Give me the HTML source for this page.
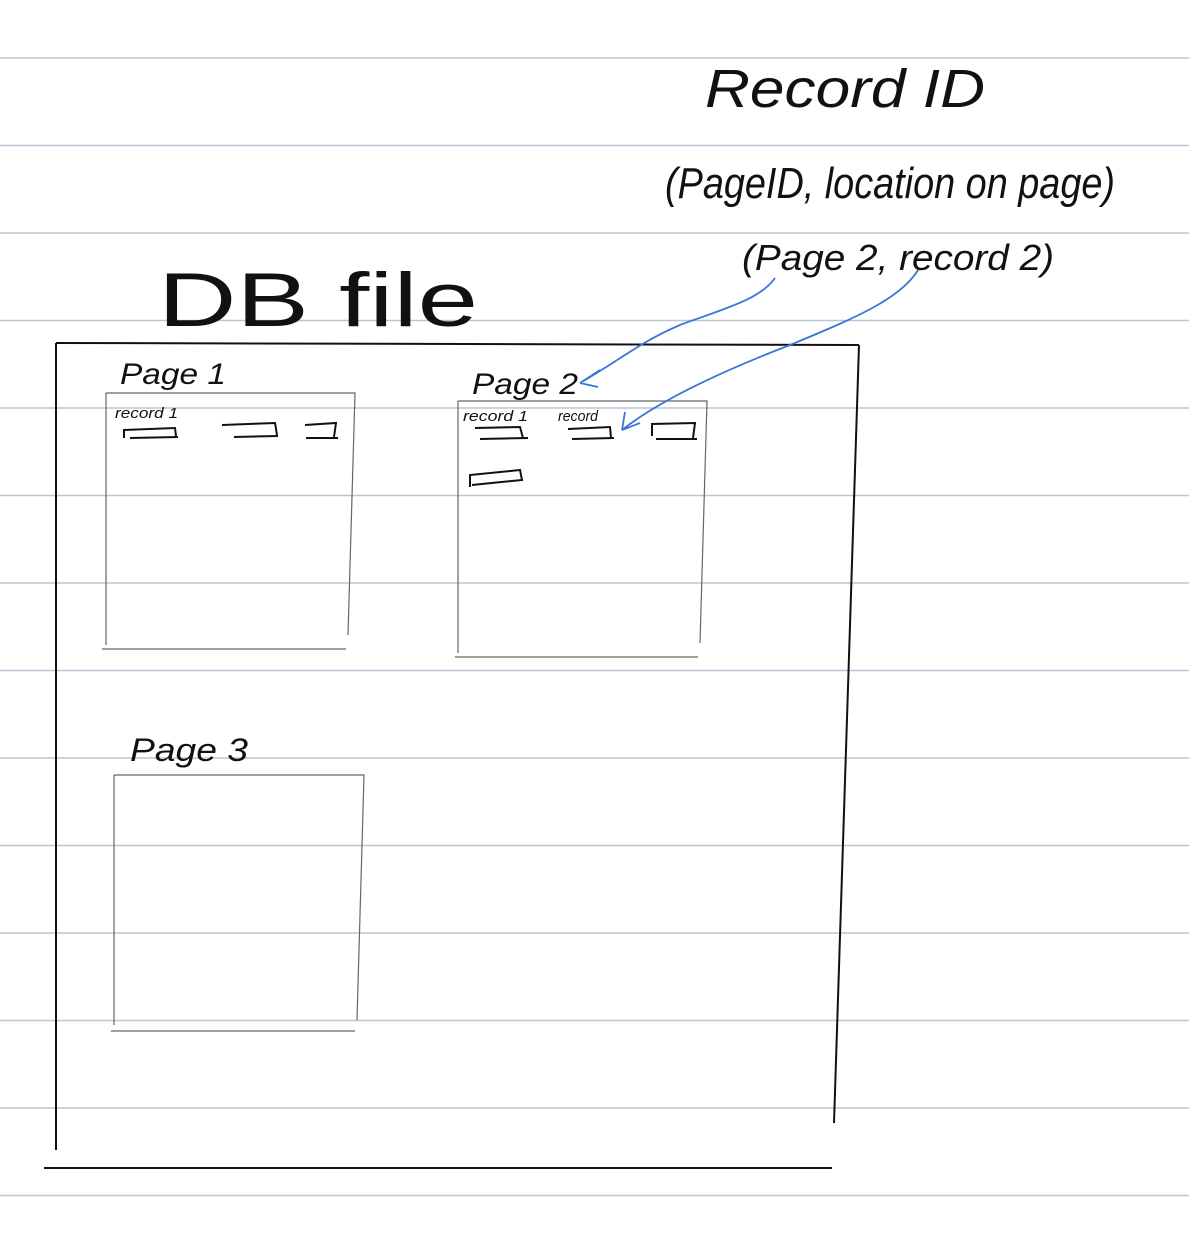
<!DOCTYPE html>
<html><head><meta charset="utf-8"><style>
html,body{margin:0;padding:0;background:#fff;}
svg{display:block;}
text{font-family:"Liberation Sans",sans-serif;fill:#111;}
</style></head><body>
<svg width="1189" height="1234" viewBox="0 0 1189 1234" xmlns="http://www.w3.org/2000/svg">
<g stroke="#b9c5d9" stroke-width="1.5">
<line x1="0" y1="58" x2="1189" y2="58"/><line x1="0" y1="145.5" x2="1189" y2="145.5"/>
<line x1="0" y1="233" x2="1189" y2="233"/><line x1="0" y1="320.5" x2="1189" y2="320.5"/>
<line x1="0" y1="408" x2="1189" y2="408"/><line x1="0" y1="495.5" x2="1189" y2="495.5"/>
<line x1="0" y1="583" x2="1189" y2="583"/><line x1="0" y1="670.5" x2="1189" y2="670.5"/>
<line x1="0" y1="758" x2="1189" y2="758"/><line x1="0" y1="845.5" x2="1189" y2="845.5"/>
<line x1="0" y1="933" x2="1189" y2="933"/><line x1="0" y1="1020.5" x2="1189" y2="1020.5"/>
<line x1="0" y1="1108" x2="1189" y2="1108"/><line x1="0" y1="1195.5" x2="1189" y2="1195.5"/>
</g>
<g stroke="#111" stroke-width="2" fill="none">
<line x1="56" y1="343" x2="859" y2="345"/>
<line x1="56" y1="343" x2="56" y2="1150"/>
<line x1="859" y1="345" x2="834" y2="1123"/>
<line x1="44" y1="1168" x2="832" y2="1168"/>
</g>
<g stroke="#666" stroke-width="1.2" fill="none">
<path d="M106 393 L355 393 L348 635 M106 393 L106 645 M102 649 L346 649"/>
<path d="M458 401 L707 401 L700 643 M458 401 L458 653 M455 657 L698 657"/>
<path d="M114 775 L364 775 L357 1020 M114 775 L114 1025 M111 1031 L355 1031"/>
</g>
<g stroke="#111" stroke-width="2" fill="none">
<path d="M124 438 L124 430 L175 428 L176 436 M130 438 L178 437"/>
<path d="M222 425 L275 423 L277 435 M234 437 L278 436"/>
<path d="M305 425 L336 423 L334 437 M306 438 L338 438"/>
<path d="M475 428 L520 427 L523 438 M480 439 L528 438"/>
<path d="M568 429 L610 427 L611 438 M572 439 L614 438"/>
<path d="M652 436 L652 424 L695 423 L693 438 M656 439 L697 439"/>
<path d="M470 487 L470 475 L520 470 L522 480 L472 485"/>
</g>
<g stroke="#3a76d6" stroke-width="1.8" fill="none">
<path d="M775 278 C760 300 720 310 680 325 C640 342 620 360 580 383 M580 383 L600 370 M580 383 L598 387"/>
<path d="M918 270 C900 300 850 320 790 345 C720 372 660 400 622 430 M622 430 L625 412 M622 430 L640 423"/>
</g>
<text x="705" y="107" font-size="54" font-style="italic" textLength="280" lengthAdjust="spacingAndGlyphs">Record ID</text>
<text x="665" y="198" font-size="44" font-style="italic" textLength="450" lengthAdjust="spacingAndGlyphs">(PageID, location on page)</text>
<text x="742" y="270" font-size="36" font-style="italic" textLength="312" lengthAdjust="spacingAndGlyphs">(Page 2, record 2)</text>
<text x="158" y="326" font-size="76" font-weight="300" textLength="320" lengthAdjust="spacingAndGlyphs">DB  file</text>
<text x="120" y="384" font-size="30" font-style="italic" textLength="106" lengthAdjust="spacingAndGlyphs">Page 1</text>
<text x="472" y="394" font-size="30" font-style="italic" textLength="106" lengthAdjust="spacingAndGlyphs">Page 2</text>
<text x="130" y="761" font-size="32" font-style="italic" textLength="118" lengthAdjust="spacingAndGlyphs">Page 3</text>
<text x="115" y="418" font-size="15" font-style="italic" textLength="63" lengthAdjust="spacingAndGlyphs">record 1</text>
<text x="463" y="421" font-size="15" font-style="italic" textLength="65" lengthAdjust="spacingAndGlyphs">record 1</text>
<text x="558" y="421" font-size="15" font-style="italic" textLength="40" lengthAdjust="spacingAndGlyphs">record</text>
</svg>
</body></html>
